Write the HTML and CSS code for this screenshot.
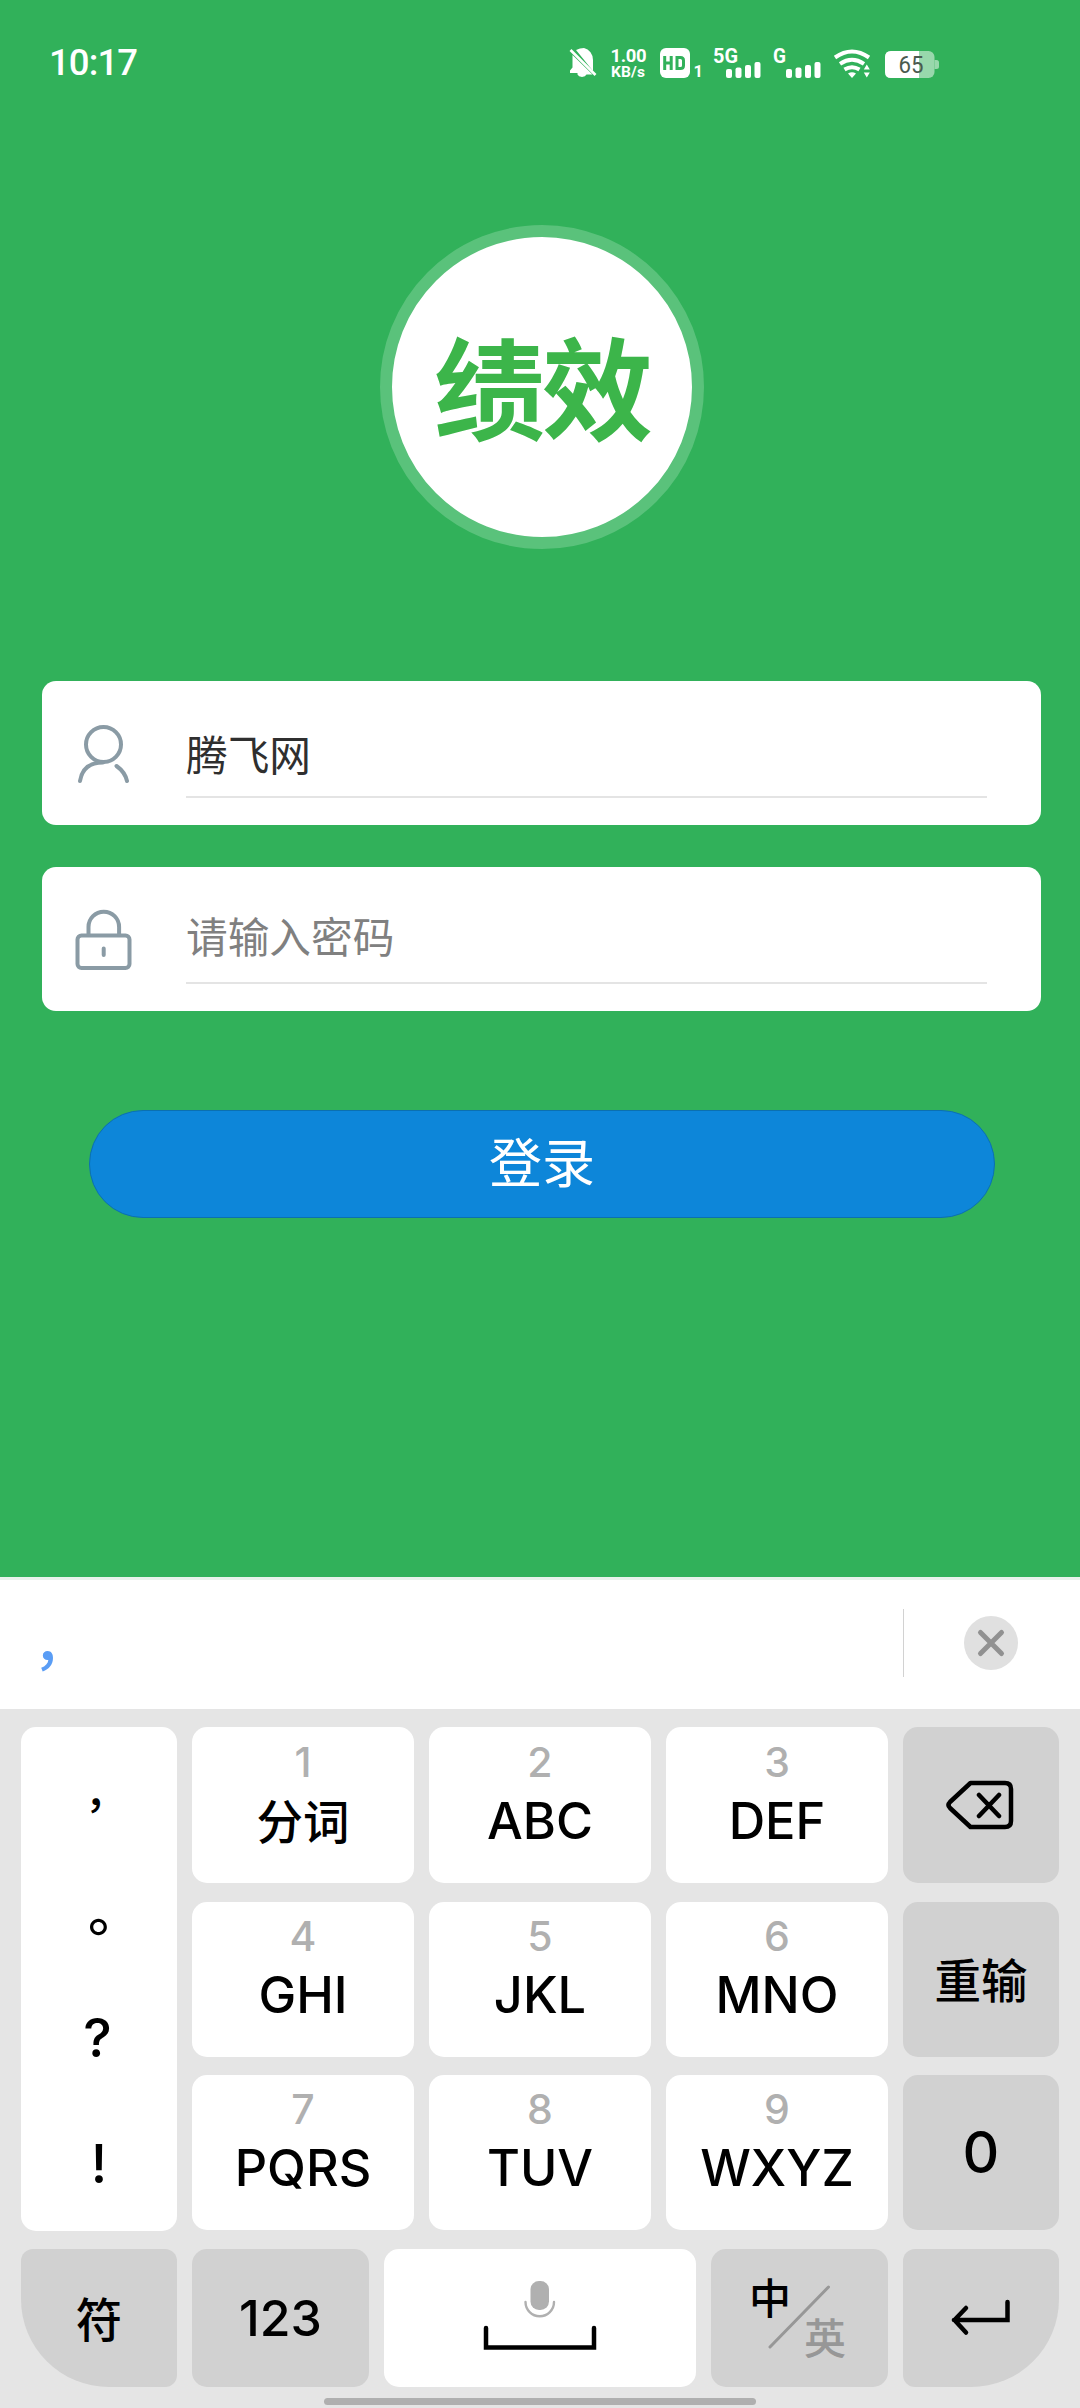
FILE: index.html
```html
<!DOCTYPE html>
<html lang="zh-CN">
<head>
<meta charset="utf-8">
<title>绩效</title>
<link rel="stylesheet" href="styles.css">
</head>
<body>
<main class="screen">
  <header class="status">
    <span class="clock">10:17</span>
    <svg class="status-icons" width="380" height="36" viewBox="565 45 380 36">
      <g fill="#fff">
        <path d="M576 50q4-2 8-2a11 12 0 0 1 9 12v11zM572.500 55l20 19.500H586.500a4.700 3.500 0 0 1-9 0v-1.500H570v-2.500l2.500-3z"/>
        <path d="M570.500 50l25 25" stroke="#fff" stroke-width="2.600"/>
        <text x="610.500" y="62" font-size="18.500" font-weight="700" textLength="36">1.00</text>
        <text x="611" y="77" font-size="15.500" font-weight="700" textLength="34">KB/s</text>
        <rect x="660" y="48" width="30" height="30" rx="6"/>
        <text x="693.500" y="77" font-size="16.500" font-weight="700">1</text>
        <text x="713" y="62.500" font-size="21" font-weight="700" textLength="25" lengthAdjust="spacingAndGlyphs">5G</text>
        <text x="773" y="62.500" font-size="21" font-weight="700" textLength="13" lengthAdjust="spacingAndGlyphs">G</text>
        <rect x="726" y="69" width="6" height="9" rx="2"/><rect x="735.500" y="67.500" width="6" height="10.500" rx="2"/><rect x="745" y="65" width="6" height="13" rx="2"/><rect x="754.500" y="62" width="6" height="16" rx="2"/>
        <rect x="786" y="69" width="6" height="9" rx="2"/><rect x="795.500" y="67.500" width="6" height="10.500" rx="2"/><rect x="805" y="65" width="6" height="13" rx="2"/><rect x="814.500" y="62" width="6" height="16" rx="2"/>
        <path d="M848 73.500q4-2.500 8 0l-4 4.500zM866.800 64.500l3 5h-6zM866.800 77.500l3-5h-6z"/>
      </g>
      <path d="M664.700 56v14M671.200 56v14M664.700 63h6.500M677 57.500h3.500q3 0 3 3v5q0 3-3 3H677z" fill="none" stroke="#31b15a" stroke-width="3"/>
      <path d="M835 57.500q17-12 34 0M840 63.800q12-8 24 0M844.500 69.500q7.500-4.500 15 0" fill="none" stroke="#fff" stroke-width="4"/>
      <rect x="885" y="51" width="49.500" height="27" rx="6" fill="#98d8ac"/>
      <path d="M934.500 60h2q2.500 0 2.500 2.500v4q0 2.500-2.500 2.500h-2z" fill="#98d8ac"/>
      <path d="M919 51h-28q-6 0-6 6v15q0 6 6 6h28z" fill="#fff"/>
      <text x="898.500" y="73" font-size="24" fill="#4a5a4f" textLength="25" lengthAdjust="spacingAndGlyphs">65</text>
    </svg>
  </header>

  <div class="logo">绩效</div>

  <form class="login">
    <label class="field">
      <svg class="field-icon" width="62" height="64" viewBox="72 722 62 64"><g fill="none" stroke="#8a9ba5" stroke-width="4" stroke-linecap="round"><circle cx="103.500" cy="744.500" r="17.500"/><path d="M80 781Q83 762.500 103 762.500M116.500 766Q125 772 127 781"/></g></svg>
      <span class="value">腾飞网</span>
    </label>
    <label class="field">
      <svg class="field-icon" width="62" height="64" viewBox="72 907 62 64"><g fill="none" stroke="#8a9ba5" stroke-width="4" stroke-linecap="round"><rect x="77.500" y="934.500" width="52" height="32.500" rx="4"/><path d="M88.500 934V926a15.300 15.300 0 0 1 30.600 0v8M103.700 947.500v6.500"/></g></svg>
      <span class="value hint">请输入密码</span>
    </label>
    <button class="submit" type="button">登录</button>
  </form>

  <section class="keyboard">
    <div class="candidates">
      <span class="candidate">，</span>
      <span class="close">
        <svg width="54" height="54" viewBox="0 0 54 54"><circle cx="27" cy="27" r="27" fill="#e0e0e0"/><path d="M16.500 16.500l21 21M37.500 16.500l-21 21" stroke="#919191" stroke-width="5" stroke-linecap="round"/></svg>
      </span>
    </div>
    <div class="keys">
      <div class="key punct"><span class="comma">，</span><span class="stop">。</span><span class="ask">?</span><span class="bang">!</span></div>
      <div class="key tall"><small>1</small><b class="cjk">分词</b></div>
      <div class="key tall"><small>2</small><b>ABC</b></div>
      <div class="key tall"><small>3</small><b>DEF</b></div>
      <div class="key tall dark">
        <svg width="70" height="50" viewBox="0 0 70 50" fill="none" stroke="#000" stroke-width="4.500" stroke-linecap="round" stroke-linejoin="round"><path d="M24.500 3H59q6 0 6 6V41q0 6-6 6H24.500L4 28q-3-3 0-6zM33 15l20 21M53 15L33 36"/></svg>
      </div>
      <div class="key"><small>4</small><b>GHI</b></div>
      <div class="key"><small>5</small><b>JKL</b></div>
      <div class="key"><small>6</small><b>MNO</b></div>
      <div class="key dark"><b class="cjk">重输</b></div>
      <div class="key"><small>7</small><b>PQRS</b></div>
      <div class="key"><small>8</small><b>TUV</b></div>
      <div class="key"><small>9</small><b>WXYZ</b></div>
      <div class="key dark"><b class="zero">0</b></div>
    </div>
    <div class="bottom-keys">
      <div class="key dark corner-left"><b class="cjk">符</b></div>
      <div class="key dark"><b class="num">123</b></div>
      <div class="key space">
        <svg width="116" height="74" viewBox="482 2278 116 74"><rect x="530.500" y="2281" width="18.500" height="29" rx="8.500" fill="#b0b0b0"/><path d="M525.500 2302a14 14 0 0 0 28.500 0" fill="none" stroke="#b0b0b0" stroke-width="2.400" stroke-linecap="round"/><path d="M486 2328v19.500h108V2328" fill="none" stroke="#000" stroke-width="4.500" stroke-linecap="round"/></svg>
      </div>
      <div class="key dark">
        <svg width="177" height="138" viewBox="711 2249 177 138"><path d="M770 2347l58.500-60" stroke="#979797" stroke-width="3" stroke-linecap="round"/><text class="lang" x="749" y="2314" font-size="42">中</text><text class="lang" x="804" y="2353.500" font-size="42" fill="#979797">英</text></svg>
      </div>
      <div class="key dark corner-right">
        <svg width="62" height="42" viewBox="950 2298 62 42" fill="none" stroke="#000" stroke-width="4.500" stroke-linecap="round"><path d="M1007.500 2303v18H954M966 2309l-11.500 12 11.500 12.500"/></svg>
      </div>
    </div>
    <div class="home"></div>
  </section>
</main>
</body>
</html>
```

FILE: styles.css
```css
* { box-sizing: border-box; }
body { margin: 0; }
svg { display: block; }

.screen {
  width: 1080px;
  height: 2408px;
  display: flex;
  flex-direction: column;
  overflow: hidden;
  background: #31b15a;
  font-family: "Noto Sans CJK SC", sans-serif;
}

.status {
  height: 225px;
  padding: 45px 135px 0 49px;
  display: flex;
  justify-content: space-between;
  align-items: flex-start;
  color: #fff;
  font-family: Roboto, sans-serif;
}
.clock { font-size: 36.500px; font-weight: 500; line-height: 35px; letter-spacing: -0.900px; }
.status-icons { font-family: Roboto, sans-serif; }

.logo {
  width: 324px;
  height: 324px;
  margin-left: 380px;
  border: 12px solid #5ac27b;
  border-radius: 50%;
  background: #fff;
  color: #3cb54a;
  font-size: 111px;
  font-weight: 700;
  line-height: 294px;
  letter-spacing: -3px;
  text-align: center;
}

.login { margin-top: 132px; padding: 0 39px 0 42px; display: flex; flex-direction: column; }
.field {
  height: 144px;
  margin-bottom: 42px;
  padding: 0 54px 27px 30px;
  display: flex;
  align-items: flex-end;
  gap: 52px;
  background: #fff;
  border-radius: 14px;
}
.field-icon { margin-bottom: 12px; }
.value {
  flex: 1;
  height: 76px;
  border-bottom: 2px solid #e4e4e4;
  color: #2f2f2f;
  font-size: 41.700px;
  line-height: 63px;
}
.hint { color: #808080; line-height: 55px; }
.submit {
  height: 108px;
  margin: 57px 46px 0 47px;
  padding: 0 0 9px;
  border: 1.500px solid #0b70b0;
  border-radius: 54px;
  background: #0d86d9;
  color: #fff;
  font-family: inherit;
  font-size: 53px;
  line-height: 96px;
}

.keyboard { margin-top: 359px; height: 831px; background: #e5e5e5; font-family: Inter, "Noto Sans CJK SC", sans-serif; color: #000; }
.candidates {
  height: 132px;
  padding-bottom: 3px;
  border-top: 3px solid #e9f3ec;
  background: #fff;
  display: flex;
  justify-content: space-between;
  align-items: center;
}
.candidate { padding: 0 0 7px 33px; color: #5a9df5; font: 500 56px/70px "Noto Sans CJK SC", sans-serif; }
.close { width: 177px; height: 68px; padding-left: 60px; border-left: 1px solid #d2d2d2; display: flex; align-items: center; }

.keys {
  margin: 18px 21px 0;
  display: grid;
  grid-template-columns: 156px 222px 222px 222px 156px;
  grid-template-rows: 175px 173px 156px;
  column-gap: 15px;
}
.key {
  height: 155px;
  border-radius: 15px;
  background: #fff;
  display: flex;
  flex-direction: column;
  align-items: center;
  padding-top: 13px;
}
.key.tall { height: 156px; padding-top: 14px; }
.key small { font-size: 41px; font-weight: 500; line-height: 42px; color: #b0b0b0; }
.key b { margin-top: 8px; font-size: 50.500px; font-weight: 450; line-height: 60px; }
.key .cjk { margin-top: 6px; font-family: "Noto Sans CJK SC", sans-serif; font-size: 46.500px; font-weight: 500; }
.key.dark { background: #d1d1d1; justify-content: center; padding-top: 0; }
.key.dark b { margin-top: 0; font-weight: 500; }
.key.dark .cjk { padding-bottom: 3px; }
.key .zero { font-size: 57px; }
.key .num { font-size: 50px; }
.punct { grid-row: 1 / 4; height: 504px; padding-top: 33px; font-size: 54px; font-weight: 500; line-height: 60px; }
.punct span { height: 60px; }
.punct .comma, .punct .stop { font-family: "Noto Sans CJK SC", sans-serif; }
.punct .comma { padding-left: 14px; font-size: 42px; margin-bottom: 59px; }
.punct .stop { padding-left: 32px; margin-bottom: 69px; }
.punct .ask { padding-right: 3px; }
.punct .bang { margin-top: 66px; }

.bottom-keys {
  margin: 18px 21px 0;
  display: grid;
  grid-template-columns: 156px 177px 312px 177px 156px;
  column-gap: 15px;
}
.bottom-keys .key { height: 138px; }
.bottom-keys .space { padding-top: 29px; }
.bottom-keys .corner-left { border-radius: 12px 12px 12px 88px; }
.bottom-keys .corner-right { border-radius: 12px 12px 88px 12px; }
.lang { font-family: "Noto Sans CJK SC", sans-serif; font-weight: 500; }
.home { width: 432px; height: 7px; margin: 11px 0 0 324px; border-radius: 4px; background: #afafaf; }
```
